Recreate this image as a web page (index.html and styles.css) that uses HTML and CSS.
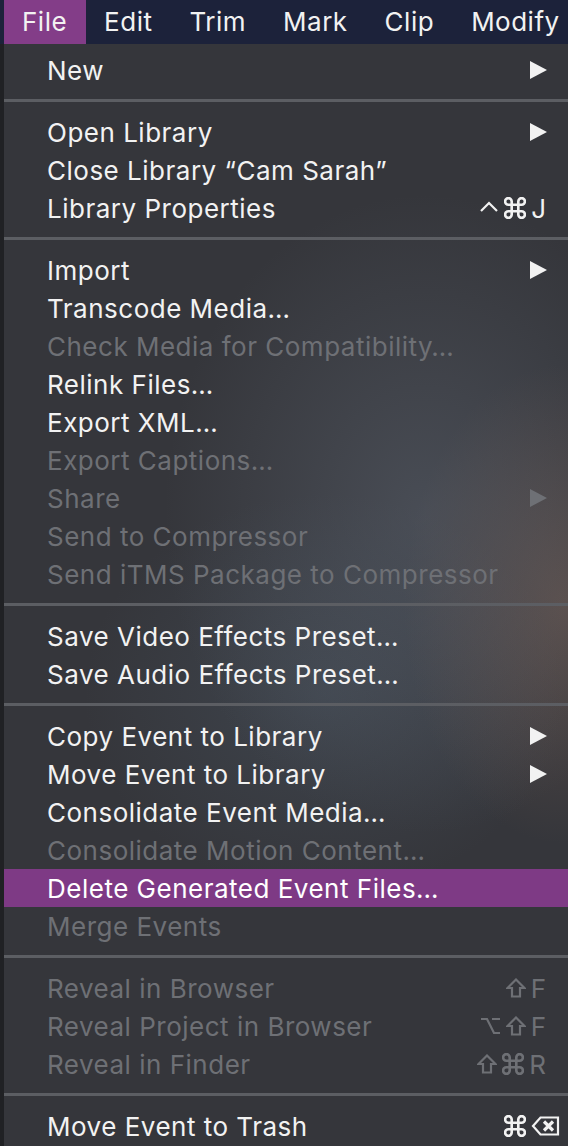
FILE: index.html
```html
<!DOCTYPE html>
<html lang="en">
<head>
    <meta charset="UTF-8">
    <title>File menu</title>
    <link rel="stylesheet" href="styles.css">
</head>
<body>
    <div class="menubar">
        <div class="bar-item active">File</div>
        <div class="bar-item">Edit</div>
        <div class="bar-item">Trim</div>
        <div class="bar-item">Mark</div>
        <div class="bar-item">Clip</div>
        <div class="bar-item">Modify</div>
    </div>

    <div class="screen">
        <div class="backdrop"></div>
        <div class="menu">
            <div class="item">New <span class="arrow"></span></div>
            <div class="sep"></div>

            <div class="item">Open Library <span class="arrow"></span></div>
            <div class="item">Close Library “Cam Sarah”</div>
            <div class="item">Library Properties
                <span class="key">
                    <svg class="glyph ctrl" viewBox="0 0 20 20"><polyline points="2,10 10,2 18,10"/></svg>
                    <svg class="glyph cmd" viewBox="2 2 20 20"><path d="M15 6v12a3 3 0 1 0 3-3H6a3 3 0 1 0 3 3V6a3 3 0 1 0-3 3h12a3 3 0 1 0-3-3"/></svg>
                    J
                </span>
            </div>
            <div class="sep"></div>

            <div class="item">Import <span class="arrow"></span></div>
            <div class="item">Transcode Media…</div>
            <div class="item off">Check Media for Compatibility…</div>
            <div class="item">Relink Files…</div>
            <div class="item">Export XML…</div>
            <div class="item off">Export Captions…</div>
            <div class="item off">Share <span class="arrow"></span></div>
            <div class="item off">Send to Compressor</div>
            <div class="item off">Send iTMS Package to Compressor</div>
            <div class="sep"></div>

            <div class="item">Save Video Effects Preset…</div>
            <div class="item">Save Audio Effects Preset…</div>
            <div class="sep"></div>

            <div class="item">Copy Event to Library <span class="arrow"></span></div>
            <div class="item">Move Event to Library <span class="arrow"></span></div>
            <div class="item">Consolidate Event Media…</div>
            <div class="item off">Consolidate Motion Content…</div>
            <div class="item selected">Delete Generated Event Files…</div>
            <div class="item off">Merge Events</div>
            <div class="sep"></div>

            <div class="item off">Reveal in Browser
                <span class="key">
                    <svg class="glyph" viewBox="0 0 20 20"><polygon points="10,1.5 18.5,10 14,10 14,18.5 6,18.5 6,10 1.5,10"/></svg>
                    F
                </span>
            </div>
            <div class="item off">Reveal Project in Browser
                <span class="key">
                    <svg class="glyph" viewBox="0 0 20 20"><path d="M0 3h6l7 14h6M11 3h8"/></svg>
                    <svg class="glyph" viewBox="0 0 20 20"><polygon points="10,1.5 18.5,10 14,10 14,18.5 6,18.5 6,10 1.5,10"/></svg>
                    F
                </span>
            </div>
            <div class="item off">Reveal in Finder
                <span class="key">
                    <svg class="glyph" viewBox="0 0 20 20"><polygon points="10,1.5 18.5,10 14,10 14,18.5 6,18.5 6,10 1.5,10"/></svg>
                    <svg class="glyph cmd" viewBox="2 2 20 20"><path d="M15 6v12a3 3 0 1 0 3-3H6a3 3 0 1 0 3 3V6a3 3 0 1 0-3 3h12a3 3 0 1 0-3-3"/></svg>
                    R
                </span>
            </div>
            <div class="sep"></div>

            <div class="item">Move Event to Trash
                <span class="key wide">
                    <svg class="glyph cmd" viewBox="2 2 20 20"><path d="M15 6v12a3 3 0 1 0 3-3H6a3 3 0 1 0 3 3V6a3 3 0 1 0-3 3h12a3 3 0 1 0-3-3"/></svg>
                    <svg class="glyph del" viewBox="0 0 28 20"><polygon points="1.5,10 9,1.5 26.5,1.5 26.5,18.5 9,18.5"/><path class="x" d="M12.5 5.5l9 9M21.5 5.5l-9 9"/></svg>
                </span>
            </div>
        </div>
    </div>
</body>
</html>
```

FILE: styles.css
```css
body {
    margin: 0;
    background: #1b1c1f;
    font-family: Inter, "Noto Sans", "DejaVu Sans", sans-serif;
    color: #f2f2f2;
    width: 568px;
    height: 1146px;
    overflow: hidden;
}
.menubar {
    display: flex;
    height: 44px;
    padding-left: 4px;
    background: #1c223a;
}
.bar-item {
    padding: 0 19px 0 18px;
    font-size: 26px;
    letter-spacing: 0.5px;
    line-height: 44px;
    white-space: nowrap;
}
.bar-item.active {
    background: #833d88;
}
.screen {
    display: flex;
    height: 1102px;
}
.backdrop {
    width: 4px;
    background: #202124;
}
.menu {
    flex: 1;
    padding-top: 7px;
    background:
        radial-gradient(ellipse 260px 320px at 420px 470px, rgba(110, 120, 135, 0.35), transparent),
        radial-gradient(ellipse 160px 240px at 560px 560px, rgba(130, 100, 85, 0.45), transparent),
        radial-gradient(ellipse 240px 200px at 320px 650px, rgba(80, 95, 110, 0.35), transparent),
        #35363b;
}
.item {
    display: flex;
    align-items: center;
    justify-content: space-between;
    height: 38px;
    padding: 0 20px 0 43px;
    font-size: 26px;
    letter-spacing: 0.5px;
    white-space: nowrap;
}
.item.off {
    color: #6e7075;
}
.item.selected {
    background: #7e3a85;
    color: #fff;
}
.sep {
    height: 3px;
    margin: 10px 0 11px;
    background: #5c5e63;
}
.key {
    display: flex;
    align-items: center;
    gap: 5px;
    margin-right: 2px;
    letter-spacing: 0;
}
.key.wide {
    margin-right: -12px;
}
.glyph {
    flex: none;
    width: 20px;
    height: 20px;
    fill: none;
    stroke: currentColor;
    stroke-width: 2.2;
    stroke-linejoin: miter;
}
.glyph.cmd {
    width: 22px;
    height: 22px;
    stroke-width: 2.4;
}
.glyph.ctrl {
    align-self: flex-start;
    margin-top: 8px;
}
.glyph.del {
    width: 29px;
    stroke-width: 2.2;
}
.glyph.del .x {
    stroke-width: 3.2;
}
.arrow {
    width: 0;
    height: 0;
    margin-right: 1px;
    border-top: 9px solid transparent;
    border-bottom: 9px solid transparent;
    border-left: 17px solid #f2f2f2;
}
.item.off .arrow {
    border-left-color: #6e7075;
}
```
